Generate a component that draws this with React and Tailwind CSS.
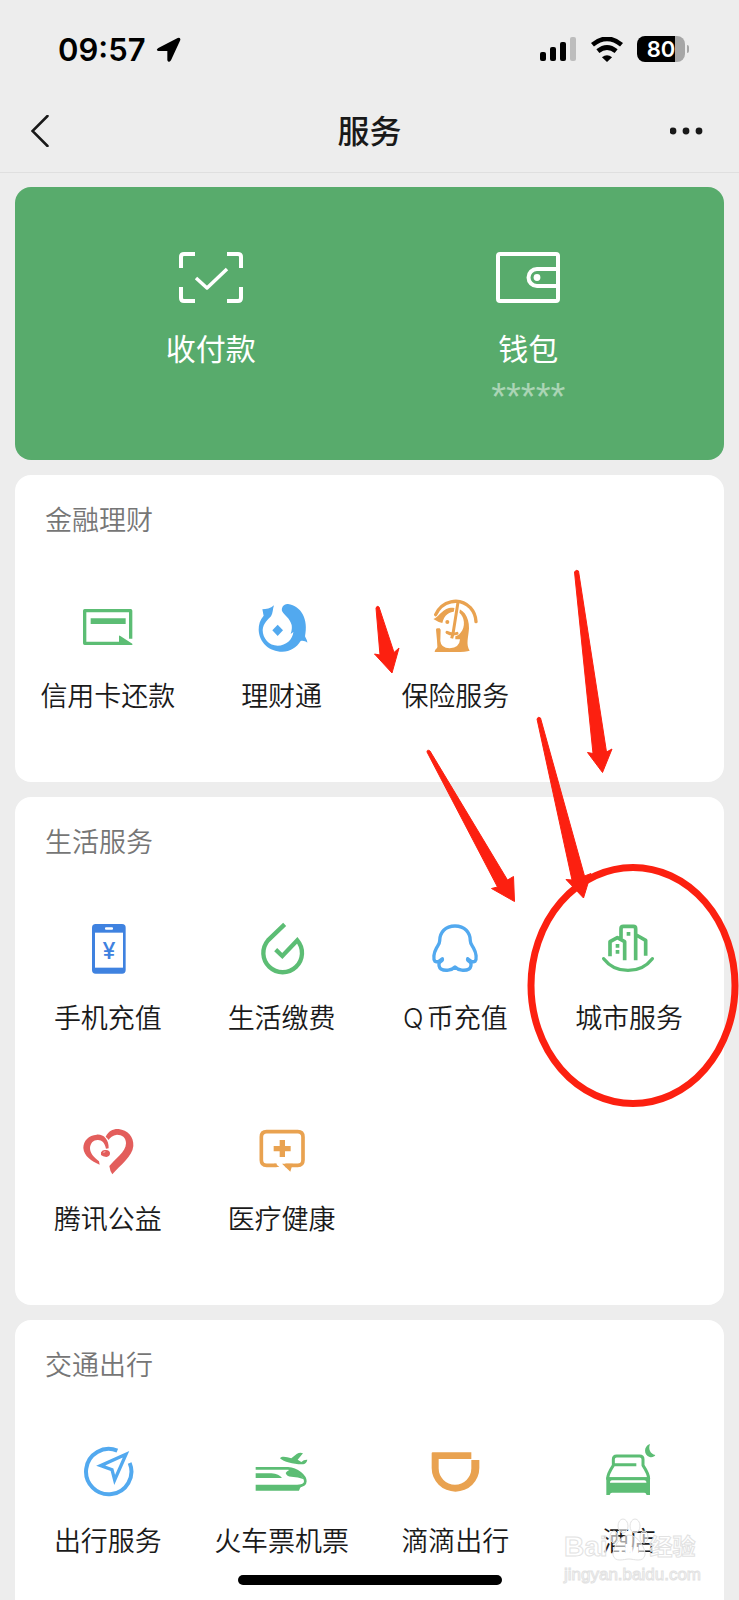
const GREEN = "#5cbd74";
const BLUE = "#52a9ef";
const ORANGE = "#e9a250";

const Icon = ({ children }) => (
    <svg viewBox="0 0 168 168" className="h-14 w-14" fill="none" aria-hidden="true">
        {children}
    </svg>
);

const CreditCardIcon = () => (
    <Icon>
        <path d="M152 119V35H14V133H120" stroke={GREEN} strokeWidth="10" strokeLinejoin="round" />
        <path d="M117 112Q117 108 121 111L157 134V138H117Z" fill={GREEN} />
        <path d="M32 58H137V75H32Z" fill={GREEN} />
    </Icon>
);

const WealthIcon = () => (
    <Icon>
        <path
            fill={BLUE}
            d="M60 19C50 28 36 31 25 31C27 38 27 44 29 50C18 62 14 76 14 92C15 130 46 158 85 158C108 158 128 146 140 126C147 124 154 126 160 131C160 123 155 118 153 112C164 62 142 20 102 15C88 14 82 26 84 36C92 50 108 58 113 78C114 86 114 92 110 105L118 99C116 122 96 140 71 140C45 140 26 118 26 93C28 72 42 62 51 52C57 42 56 30 60 19Z"
        />
        <path d="M71 77L87 94L71 111L55 94Z" fill={BLUE} />
    </Icon>
);

const InsuranceIcon = () => (
    <Icon>
        <path
            fill={ORANGE}
            d="M19 60C34 56 42 34 66 27C104 20 127 48 126 88C124 118 116 136 128 155Q116 160 70 159H23C24 150 32 148 32 142L31 92Q36 82 41 92L40 126Q42 148 68 148Q98 146 99 121H85V112C102 108 116 84 109 60Q104 44 92 38C70 36 52 46 46 72Q34 70 19 60Z"
        />
        <path d="M93 14L78 104" stroke="#fff" strokeWidth="17" />
        <path d="M26 47C44 6 96 -8 130 26Q146 44 147 68" stroke={ORANGE} strokeWidth="10" strokeLinecap="round" />
        <path d="M31 92L36 146" stroke={ORANGE} strokeWidth="8" strokeLinecap="round" />
        <path d="M93 10L78 104L74 118" stroke={ORANGE} strokeWidth="9" />
        <path d="M60 100Q74 108 90 103" stroke={ORANGE} strokeWidth="9" strokeLinecap="round" />
        <circle cx="61" cy="69" r="6" fill={ORANGE} />
    </Icon>
);

const PhoneIcon = () => (
    <Icon>
        <rect x="36" y="9" width="101" height="149" rx="11" fill="#3f82e0" />
        <path d="M45 35H129V140H45Z" fill="#fff" />
        <rect x="75" y="19" width="24" height="7" rx="3" fill="#fff" />
        <text x="87" y="114" fontSize="70" textAnchor="middle" fill="#3f82e0" className="font-['Inter',sans-serif] font-medium">
            ¥
        </text>
    </Icon>
);

const BillsIcon = () => (
    <Icon>
        <path d="M92 10L42 58A58 58 0 1 0 130 58L85 105L65 86" stroke={GREEN} strokeWidth="13" />
    </Icon>
);

const PenguinIcon = () => (
    <Icon>
        <path
            stroke={BLUE}
            strokeWidth="10"
            strokeLinejoin="round"
            d="M84 15C55 15 38 34 38 60C38 68 33 73 28 82C20 96 18 114 24 121C29 124 38 120 46 113C48 119 42 120 38 124C34 130 36 140 42 144C54 151 74 148 84 138C94 148 114 151 126 144C132 140 134 130 130 124C126 120 120 119 122 113C130 120 139 124 144 121C150 114 148 96 140 82C135 73 130 68 130 60C130 34 113 15 84 15Z"
        />
    </Icon>
);

const CityIcon = () => (
    <Icon>
        <path
            d="M60 52V23Q60 16 67 16H97Q104 16 104 23V118M27 106V62L49 50L71 62V118M106 42L134 58V104"
            stroke={GREEN}
            strokeWidth="11"
            strokeLinejoin="round"
        />
        <path d="M44 69H55V80H44ZM44 87H55V98H44ZM77 33H88V44H77Z" fill={GREEN} />
        <path d="M8 113C44 160 118 160 154 113" stroke={GREEN} strokeWidth="10" strokeLinecap="round" />
    </Icon>
);

const CharityIcon = () => (
    <Icon>
        <path
            fill="#e35e5c"
            d="M77 44C86 26 100 20 116 21C142 24 162 44 160 72C157 104 122 128 97 157Q90 148 88 132C104 112 138 90 138 64C138 46 126 38 111 38C98 40 90 46 86 54Q82 48 77 44Z"
        />
        <path
            fill="#e35e5c"
            d="M86 79C87 52 70 36 50 38C26 40 10 56 10 78C12 102 34 118 59 128L57 118C42 106 30 94 30 78C31 62 42 53 54 54C66 54 74 62 78 80Z"
        />
        <path d="M63 91Q68 82 78 84Q90 85 90 94Q90 104 79 105Q68 104 63 99Z" fill="#e35e5c" />
        <path d="M70 91L76 89" stroke="#fff" strokeWidth="2" />
    </Icon>
);

const HealthIcon = () => (
    <Icon>
        <path
            d="M68 130H38Q22 130 22 114V45Q22 29 38 29H131Q147 29 147 45V114Q147 130 131 130H94"
            stroke={ORANGE}
            strokeWidth="11"
        />
        <path d="M62 123L76 135H62ZM84 125H116L109 149Z" fill={ORANGE} />
        <path d="M85 54V105M59 80H110" stroke={ORANGE} strokeWidth="16" />
    </Icon>
);

const TravelIcon = () => (
    <Icon>
        <path d="M112 20A68 68 0 1 0 149 57" stroke={BLUE} strokeWidth="12" />
        <path d="M138 31L62 65L96 77L104 108Z" stroke={BLUE} strokeWidth="10" />
    </Icon>
);

const TrainIcon = () => (
    <Icon>
        <path
            fill={GREEN}
            d="M78 43C84 35 98 39 112 43L128 30Q138 24 147 28L131 47L142 54Q150 46 160 47Q158 58 148 61C120 62 90 54 78 43Z"
        />
        <path d="M5 73H102C130 75 154 96 154 112Q154 126 130 127" stroke={GREEN} strokeWidth="8" />
        <path d="M5 88H52Q76 90 84 102H5ZM5 122H146Q138 130 135 140H5Z" fill={GREEN} />
        <path d="M95 87Q104 74 118 77Q138 86 150 106Q132 98 112 98Q98 98 95 87Z" fill={GREEN} />
    </Icon>
);

const DidiIcon = () => (
    <Icon>
        <path d="M14 28Q14 25 17 25H133V45H35V73A49 49 0 0 0 133 73V48H157V72A71.500 71 0 0 1 14 72Z" fill={ORANGE} />
    </Icon>
);

const HotelIcon = () => (
    <Icon>
        <path
            d="M106 62H37V46Q37 36 47 36H116Q126 36 126 46V64Q143 90 143 104H20Q20 90 37 64"
            stroke={GREEN}
            strokeWidth="9"
            strokeLinejoin="round"
        />
        <path d="M16 100H147V153H137Q135 146 130 146H33Q28 146 26 153H16Z" fill={GREEN} />
        <path d="M27 113Q29 109 34 109H129Q134 109 136 113V116H27Z" fill="#fff" />
        <path d="M147 0C127 6 128 34 146 39C154 41 160 38 163 33C148 30 141 16 147 0Z" fill={GREEN} />
    </Icon>
);

const sections = [
    {
        title: "金融理财",
        items: [
            { name: "信用卡还款", icon: CreditCardIcon },
            { name: "理财通", icon: WealthIcon },
            { name: "保险服务", icon: InsuranceIcon },
        ],
    },
    {
        title: "生活服务",
        items: [
            { name: "手机充值", icon: PhoneIcon },
            { name: "生活缴费", icon: BillsIcon },
            { name: "Q币充值", icon: PenguinIcon },
            { name: "城市服务", icon: CityIcon },
            { name: "腾讯公益", icon: CharityIcon },
            { name: "医疗健康", icon: HealthIcon },
        ],
    },
    {
        title: "交通出行",
        items: [
            { name: "出行服务", icon: TravelIcon },
            { name: "火车票机票", icon: TrainIcon },
            { name: "滴滴出行", icon: DidiIcon },
            { name: "酒店", icon: HotelIcon },
        ],
    },
];

const StatusBar = () => (
    <div className="flex h-[90px] shrink-0 items-center justify-between pt-2 pr-[50px] pl-[58px] text-black">
        <div className="flex items-center gap-[10px]">
            <span className="pt-[2px] text-[31px] leading-10 font-semibold">09:57</span>
            <svg viewBox="0 0 75 75" className="h-[25px] w-[25px]" aria-hidden="true">
                <path d="M7 33L65 3Q74 0 73 9L45 70Q38 79 34 70V42H7Q-2 39 7 33Z" fill="#000" />
            </svg>
        </div>
        <div className="flex items-center gap-[14px]">
            <svg viewBox="0 0 37 25" className="h-[25px] w-[37px]" aria-hidden="true">
                <rect x="0" y="15" width="6" height="9" rx="2" />
                <rect x="10" y="10" width="6" height="14" rx="2" />
                <rect x="20" y="5" width="6" height="19" rx="2" />
                <rect x="30" y="0" width="6" height="24" rx="2" fill="#bdbdbd" />
            </svg>
            <svg viewBox="0 0 94 74" className="h-[25px] w-8" fill="none" aria-hidden="true">
                <path d="M4 23Q47 -12 90 23" stroke="#000" strokeWidth="14" />
                <path d="M20 42Q47 20 74 42" stroke="#000" strokeWidth="14" />
                <path d="M32 60Q47 48 62 60L47 74Z" fill="#000" />
            </svg>
            <div className="flex items-center">
                <div className="flex h-[26px] w-12 items-center justify-center rounded-[8px] bg-linear-to-r from-black from-80% to-[#a6a6a6] to-80%">
                    <span className="text-[22px] leading-[26px] font-semibold text-white">80</span>
                </div>
                <div className="ml-[2px] h-2 w-[2px] rounded-r-full bg-[#a6a6a6]" />
            </div>
        </div>
    </div>
);

const ServiceItem = ({ name, icon: ItemIcon }) => (
    <button type="button" className="flex h-[201px] flex-col items-center pt-[18px]">
        <ItemIcon />
        <span className="mt-6 text-[27px] leading-9 font-[350] whitespace-nowrap text-[#1a1a1a] [text-autospace:normal]">
            {name}
        </span>
    </button>
);

// hand drawn marks that lie on top of the page
const Annotations = () => (
    <svg viewBox="0 0 739 1600" className="pointer-events-none absolute top-0 left-0 w-full" aria-hidden="true">
        <g fill="#fc2010" stroke="#fc2010" strokeWidth="1" strokeLinejoin="round">
            <path d="M376 608Q377 605 379 607L394 652.500L399 648L392 673L374.500 654L380 655Z" />
            <path d="M427 752Q427 749 430 751L507.500 880L513.500 876.500L514.500 901.500L491.500 888.500L497.500 887Z" />
            <path d="M537 719Q538 716 540.500 718L584.500 876L591 873.500L583.500 898L566 879.500L572 880Z" />
            <path d="M574.500 572Q576 569 578.500 571L606.500 752L612 749L602.500 772.500L587.500 752.500L593 753.500Z" />
        </g>
        <ellipse cx="633" cy="985.500" rx="102" ry="118" fill="none" stroke="#fc2010" strokeWidth="7" />
    </svg>
);

const Watermark = () => (
    <div className="pointer-events-none absolute right-[38px] bottom-[13px] flex flex-col text-white/70 [-webkit-text-stroke:1px_#e2e2e2]">
        <div className="flex items-end font-['Liberation_Sans','Noto_Sans_CJK_SC',sans-serif] font-bold">
            <span className="text-[28px] leading-8">Bai</span>
            <svg viewBox="0 0 42 46" className="h-[46px] w-[42px]" aria-hidden="true">
                <g fill="#fff" fillOpacity="0.6" stroke="#e2e2e2">
                    <ellipse cx="15" cy="9" rx="5" ry="7" />
                    <ellipse cx="27" cy="9" rx="5" ry="7" />
                    <ellipse cx="6" cy="20" rx="4" ry="6" />
                    <ellipse cx="36" cy="20" rx="4" ry="6" />
                    <path d="M21 18C30 18 38 32 37 38C35 46 26 42 21 42C16 42 7 46 5 38C4 32 12 18 21 18Z" />
                </g>
                <text x="21" y="39" fontSize="17" textAnchor="middle" fill="#fff">
                    du
                </text>
            </svg>
            <span className="text-[23px] leading-8">经验</span>
        </div>
        <span className="font-['Liberation_Sans',sans-serif] text-[17px] leading-6">jingyan.baidu.com</span>
    </div>
);

const App = () => {
    return (
        <div
            lang="zh-CN"
            className="relative flex h-screen flex-col overflow-hidden bg-[#ededed] font-['Inter','Noto_Sans_CJK_SC',sans-serif]"
        >
            <StatusBar />
            <header className="grid h-[83px] shrink-0 grid-cols-3 items-center border-b border-[#dfdfdf] px-[31px] text-[#191919]">
                <button type="button" aria-label="返回" className="justify-self-start">
                    <svg viewBox="0 0 18 32" className="h-8 w-[18px]" fill="none" stroke="currentColor" strokeWidth="2.500" strokeLinecap="round">
                        <path d="M16.500 1L1.500 16L16.500 31" />
                    </svg>
                </button>
                <h1 className="pt-[2px] text-center text-[32px] leading-10 font-medium">服务</h1>
                <button type="button" aria-label="更多" className="justify-self-end">
                    <svg viewBox="0 0 38 32" className="h-8 w-[38px]" fill="currentColor">
                        <circle cx="3" cy="16" r="3.400" />
                        <circle cx="16" cy="16" r="3.400" />
                        <circle cx="29" cy="16" r="3.400" />
                    </svg>
                </button>
            </header>

            <main className="flex flex-col gap-[15px] px-[15px] pt-[14px]">
                <section className="grid h-[273px] shrink-0 grid-cols-2 rounded-2xl bg-[#58ab6c] px-[37px] pt-[65px] text-white">
                    <button type="button" className="flex flex-col items-center">
                        <svg viewBox="0 0 64 51" className="h-[51px] w-16" fill="none" stroke="currentColor" strokeWidth="4" aria-hidden="true">
                            <path d="M2 16V5Q2 2 5 2H16M48 2H59Q62 2 62 5V16M62 35V46Q62 49 59 49H48M16 49H5Q2 49 2 46V35" />
                            <path d="M17 26L28 36L48 17" strokeWidth="3.500" strokeLinejoin="round" />
                        </svg>
                        <span className="mt-7 text-[30px] leading-9">收付款</span>
                    </button>
                    <button type="button" className="flex flex-col items-center">
                        <svg viewBox="0 0 64 51" className="h-[51px] w-16" fill="none" stroke="currentColor" strokeWidth="4" aria-hidden="true">
                            <rect x="2" y="2" width="60" height="47" rx="2" />
                            <path d="M62 17H41A8 8 0 0 0 41 34H62" />
                            <circle cx="41" cy="25.500" r="3.400" fill="currentColor" stroke="none" />
                        </svg>
                        <span className="mt-7 text-[30px] leading-9">钱包</span>
                        <span className="mt-[18px] font-['Liberation_Sans',sans-serif] text-[38px] leading-6 text-white/50">*****</span>
                    </button>
                </section>

                {sections.map((section) => (
                    <section key={section.title} className="shrink-0 rounded-2xl bg-white pr-2 pl-[6px]">
                        <h2 className="px-6 pt-7 pb-[42px] text-[27px] leading-9 font-[350] text-[#767676]">{section.title}</h2>
                        <div className="grid grid-cols-4">
                            {section.items.map((item) => (
                                <ServiceItem key={item.name} name={item.name} icon={item.icon} />
                            ))}
                        </div>
                    </section>
                ))}
            </main>

            <Annotations />
            <Watermark />
            <div className="absolute bottom-[15px] left-1/2 h-[10px] w-[264px] -translate-x-1/2 rounded-full bg-black" />
        </div>
    );
};

export default App;
